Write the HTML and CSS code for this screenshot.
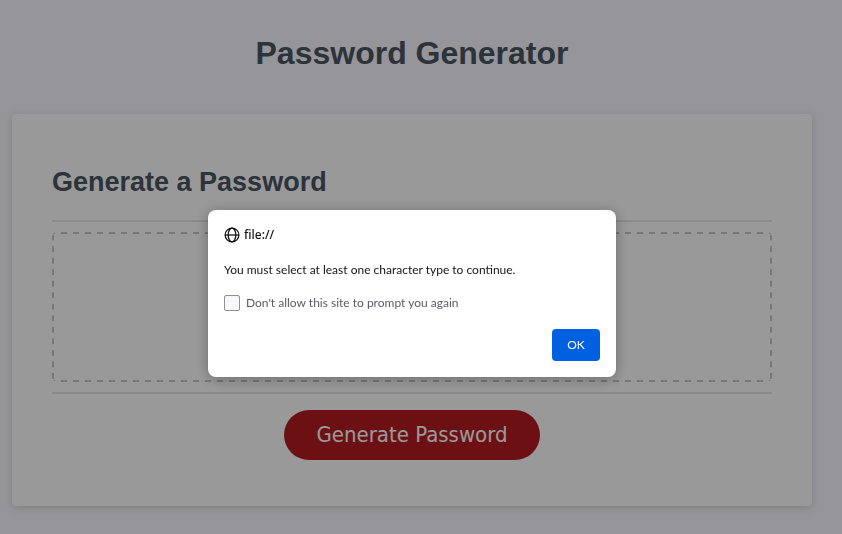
FILE: index.html
```html
<!DOCTYPE html>
<html lang="en">
<head>
  <meta charset="utf-8">
  <meta name="viewport" content="width=device-width, initial-scale=1">
  <title>Password Generator</title>
  <link rel="stylesheet" href="styles.css">
</head>
<body>
  <div class="wrapper">
    <header class="page-header">
      <h1>Password Generator</h1>
    </header>
    <main class="card">
      <h2 class="card-title">Generate a Password</h2>
      <div class="card-body">
        <textarea class="password" readonly aria-label="Generated password"></textarea>
      </div>
      <div class="card-footer">
        <button class="generate" type="button">Generate Password</button>
      </div>
    </main>
  </div>

  <div class="overlay">
    <div class="dialog" role="alertdialog" aria-modal="true" aria-labelledby="origin" aria-describedby="message">
      <div class="origin">
        <svg class="globe" viewBox="0 0 16 16" aria-hidden="true">
          <circle cx="8" cy="8" r="6.9"/>
          <ellipse cx="8" cy="8" rx="3.8" ry="6.9"/>
          <path d="M1 8h14"/>
        </svg>
        <span id="origin">file://</span>
      </div>
      <p class="message" id="message">You must select at least one character type to continue.</p>
      <label class="suppress"><input type="checkbox">Don't allow this site to prompt you again</label>
      <div class="actions">
        <button class="ok" type="button">OK</button>
      </div>
    </div>
  </div>
</body>
</html>
```
FILE: styles.css
```css
* {
  box-sizing: border-box;
}

body {
  margin: 0;
  min-height: 100vh;
  background: #faf9ff;
  color: #4a5663;
  font-family: "Liberation Sans", Arial, sans-serif;
}

.wrapper {
  padding: 0 30px 28px 12px;
}

.page-header {
  padding: 32px 0 40px;
  text-align: center;
}

h1,
h2 {
  margin: 0;
}

h1 {
  font-size: 32px;
  line-height: 42px;
}

.card {
  max-width: 800px;
  margin: 0 auto;
  padding: 40px;
  border-radius: 4px;
  background: #fff;
  box-shadow: 0 2px 9px rgba(0, 0, 0, 0.15);
}

.card-title {
  padding-bottom: 10px;
  font-size: 27px;
  line-height: 56px;
}

.card-body {
  padding: 10px 0;
  border-top: 2px solid #e4e4e6;
  border-bottom: 2px solid #e4e4e6;
}

.password {
  --dash: #c6c6cc;
  --row: linear-gradient(90deg, transparent 25%, var(--dash) 25% 75%, transparent 75%);
  --column: linear-gradient(transparent 25%, var(--dash) 25% 75%, transparent 75%);
  display: block;
  width: 100%;
  height: 150px;
  padding: 20px;
  border: 0;
  border-radius: 5px;
  background:
    var(--row) top / 12px 2px round no-repeat,
    var(--row) bottom / 12px 2px round no-repeat,
    var(--column) left / 2px 12px no-repeat round,
    var(--column) right / 2px 12px no-repeat round;
  resize: none;
}

.card-footer {
  padding: 16px 0 6px;
  text-align: center;
}

.generate {
  display: inline-block;
  height: 50px;
  padding: 0 32px;
  border: 0;
  border-radius: 25px;
  background: #b41b22;
  color: #fff;
  font: 22px/50px Tahoma, "DejaVu Sans Condensed", sans-serif;
  vertical-align: top;
}

.overlay {
  position: fixed;
  inset: 0;
  display: flex;
  align-items: flex-start;
  justify-content: center;
  padding: 210px 18px 0 0;
  background: rgba(0, 0, 0, 0.4);
}

.dialog {
  width: 100%;
  max-width: 408px;
  padding: 16px;
  border-radius: 8px;
  background: #fff;
  color: #15141a;
  box-shadow: 0 2px 14px rgba(0, 0, 0, 0.3);
  font: 12px/18px "Segoe UI", Lato, sans-serif;
}

.origin {
  display: flex;
  align-items: center;
  gap: 4px;
  font-family: "Segoe UI", "Noto Sans", sans-serif;
  font-weight: 500;
}

.globe {
  width: 16px;
  height: 16px;
  fill: none;
  stroke: currentColor;
  stroke-width: 1.3;
}

.message {
  margin: 17px 0 15px;
}

.suppress {
  display: flex;
  align-items: center;
  gap: 6px;
  color: #5b5b66;
}

.suppress input {
  width: 16px;
  height: 16px;
  margin: 0;
  border: 1px solid #8f8f9d;
  border-radius: 2px;
  background: #f9f9f9;
  appearance: none;
}

.actions {
  display: flex;
  justify-content: flex-end;
  padding-top: 17px;
}

.ok {
  min-width: 48px;
  height: 32px;
  padding: 0 12px;
  border: 0;
  border-radius: 4px;
  background: #0061e0;
  color: #fff;
  font: inherit;
}
```
